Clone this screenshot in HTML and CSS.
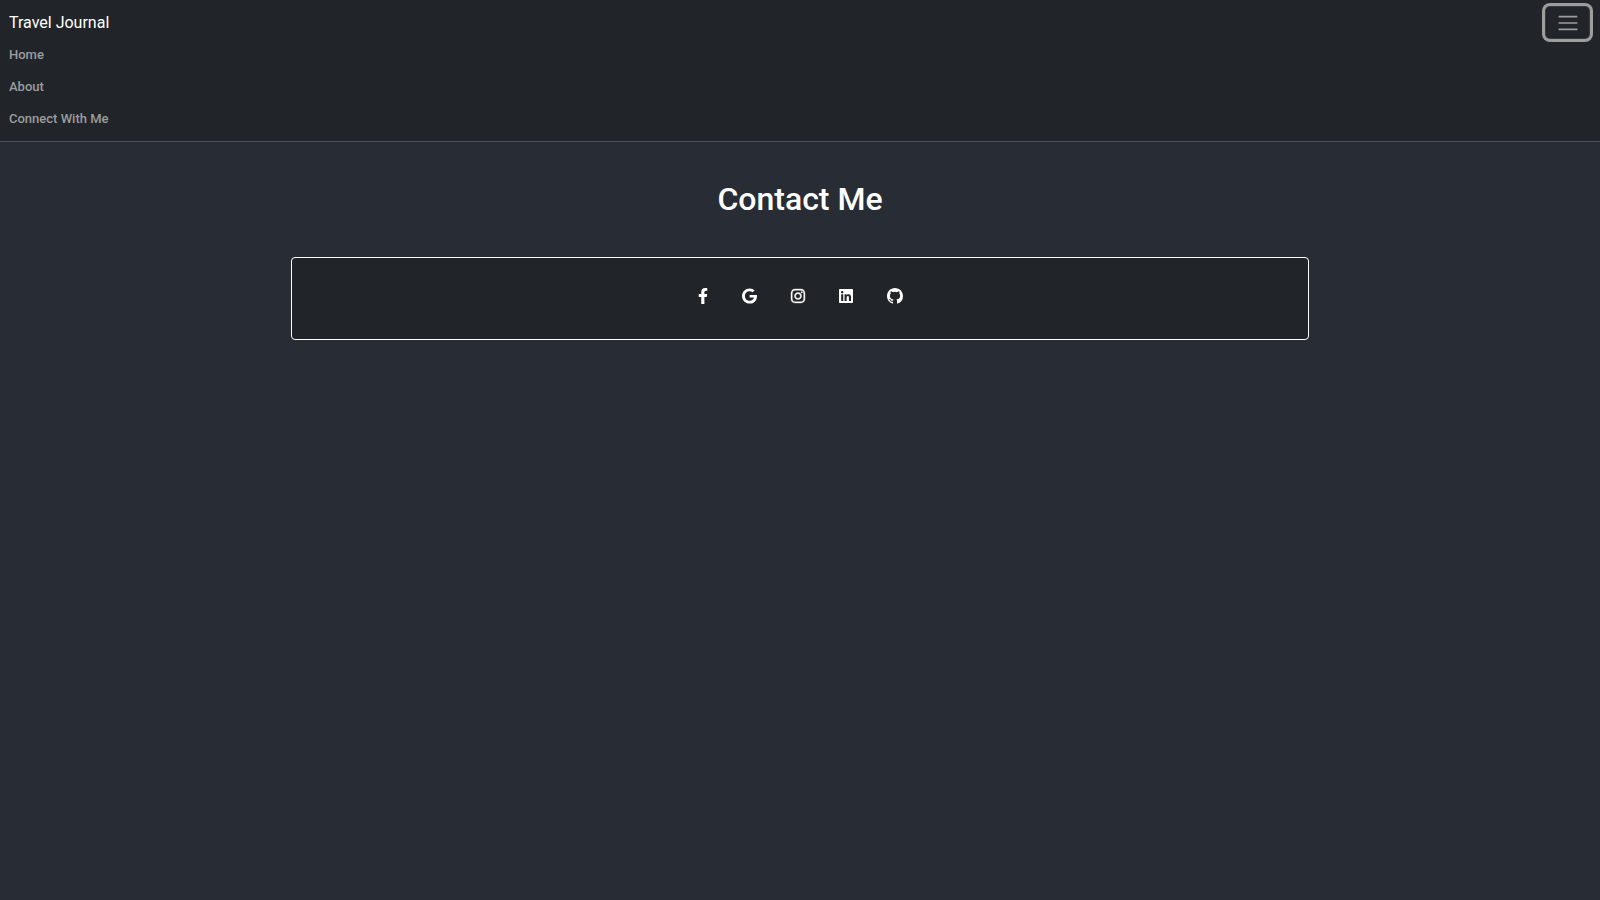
FILE: index.html
```html
<!DOCTYPE html>
<html lang="en">
<head>
<meta charset="utf-8">
<title>Travel Journal</title>
<link rel="stylesheet" href="styles.css">
</head>
<body>
<nav class="navbar">
  <div class="navbar-top">
    <a class="brand" href="#">Travel Journal</a>
    <button class="toggler" type="button" aria-label="Toggle navigation" aria-expanded="true">
      <svg viewBox="0 0 30 30" width="24" height="24" aria-hidden="true"><path d="M4 7h22M4 15h22M4 23h22" fill="none" stroke="currentColor" stroke-width="2" stroke-linecap="round" stroke-miterlimit="10"/></svg>
    </button>
  </div>
  <ul class="nav-list">
    <li><a class="nav-link" href="#">Home</a></li>
    <li><a class="nav-link" href="#">About</a></li>
    <li><a class="nav-link" href="#">Connect With Me</a></li>
  </ul>
</nav>
<main class="container">
  <h1 class="title">Contact Me</h1>
  <section class="card">
    <a class="social" href="#" aria-label="Facebook"><svg viewBox="0 0 320 512" width="10" height="16"><path d="M279.14 288l14.22-92.66h-88.91v-60.13c0-25.35 12.42-50.06 52.24-50.06h40.42V6.26S260.43 0 225.36 0c-73.22 0-121.08 44.38-121.08 124.72v70.62H22.89V288h81.39v224h100.17V288z"/></svg></a>
    <a class="social" href="#" aria-label="Google"><svg viewBox="0 0 488 512" width="15" height="16"><path d="M488 261.8C488 403.3 391.1 504 248 504 110.8 504 0 393.2 0 256S110.8 8 248 8c66.8 0 123 24.5 166.3 64.9l-67.5 64.9C258.5 52.6 94.3 116.6 94.3 256c0 86.5 69.1 156.6 153.7 156.6 98.2 0 135-70.4 140.8-106.9H248v-85.3h236.1c2.3 12.7 3.9 24.9 3.9 41.4z"/></svg></a>
    <a class="social" href="#" aria-label="Instagram"><svg class="heavy" viewBox="0 0 448 512" width="14" height="16"><path d="M224.1 141c-63.6 0-114.9 51.3-114.9 114.9s51.3 114.9 114.9 114.9S339 319.5 339 255.9 287.7 141 224.1 141zm0 189.6c-41.1 0-74.7-33.5-74.7-74.7s33.5-74.7 74.7-74.7 74.7 33.5 74.7 74.7-33.6 74.7-74.7 74.7zm146.4-194.3c0 14.9-12 26.8-26.8 26.8-14.9 0-26.8-12-26.8-26.8s12-26.8 26.8-26.8 26.8 12 26.8 26.8zm76.1 27.2c-1.7-35.9-9.9-67.7-36.2-93.9-26.2-26.2-58-34.4-93.9-36.2-37-2.1-147.9-2.1-184.9 0-35.8 1.7-67.6 9.9-93.9 36.1s-34.4 58-36.2 93.9c-2.1 37-2.1 147.9 0 184.9 1.7 35.9 9.9 67.7 36.2 93.9s58 34.4 93.9 36.2c37 2.1 147.9 2.1 184.9 0 35.9-1.7 67.7-9.9 93.9-36.2 26.2-26.2 34.4-58 36.2-93.9 2.1-37 2.1-147.8 0-184.8zM398.8 388c-7.8 19.6-22.9 34.7-42.6 42.6-29.5 11.7-99.5 9-132.1 9s-102.7 2.6-132.1-9c-19.6-7.8-34.7-22.9-42.6-42.6-11.7-29.5-9-99.5-9-132.1s-2.6-102.7 9-132.1c7.8-19.6 22.9-34.7 42.6-42.6 29.5-11.7 99.5-9 132.1-9s102.7-2.6 132.1 9c19.6 7.8 34.7 22.9 42.6 42.6 11.7 29.5 9 99.5 9 132.1s2.7 102.7-9 132.1z"/></svg></a>
    <a class="social" href="#" aria-label="LinkedIn"><svg viewBox="0 0 448 512" width="14" height="16"><path d="M416 32H31.9C14.3 32 0 46.5 0 64.3v383.4C0 465.5 14.3 480 31.9 480H416c17.6 0 32-14.5 32-32.3V64.3c0-17.8-14.4-32.3-32-32.3zM135.4 416H69V202.2h66.5V416zm-33.2-243c-21.3 0-38.5-17.3-38.5-38.5S80.9 96 102.2 96c21.2 0 38.5 17.3 38.5 38.5 0 21.3-17.2 38.5-38.5 38.5zm282.1 243h-66.4V312c0-24.8-.5-56.7-34.5-56.7-34.6 0-39.9 27-39.9 54.9V416h-66.4V202.2h63.7v29.2h.9c8.9-16.8 30.6-34.5 62.9-34.5 67.2 0 79.7 44.3 79.7 101.9V416z"/></svg></a>
    <a class="social" href="#" aria-label="GitHub"><svg viewBox="0 0 16 16" width="16" height="16"><path d="M8 0C3.58 0 0 3.58 0 8c0 3.54 2.29 6.53 5.47 7.59.4.07.55-.17.55-.38 0-.19-.01-.82-.01-1.49-2.01.37-2.53-.49-2.69-.94-.09-.23-.48-.94-.82-1.13-.28-.15-.68-.52-.01-.53.63-.01 1.08.58 1.23.82.72 1.21 1.87.87 2.33.66.07-.52.28-.87.51-1.07-1.78-.2-3.64-.89-3.64-3.95 0-.87.31-1.59.82-2.15-.08-.2-.36-1.02.08-2.12 0 0 .67-.21 2.2.82a7.6 7.6 0 0 1 4 0c1.53-1.04 2.2-.82 2.2-.82.44 1.1.16 1.92.08 2.12.51.56.82 1.27.82 2.15 0 3.07-1.87 3.75-3.65 3.95.29.25.54.73.54 1.48 0 1.07-.01 1.93-.01 2.2 0 .21.15.46.55.38A8.01 8.01 0 0 0 16 8c0-4.42-3.58-8-8-8z"/></svg></a>
  </section>
</main>
</body>
</html>
```
FILE: styles.css
```css
* { box-sizing: border-box; }
body {
  margin: 0;
  background: #282c34;
  color: #fff;
  font-family: Roboto, sans-serif;
  font-size: 16px;
  line-height: 24px;
}
a { color: inherit; text-decoration: none; }
.navbar {
  background: #212529;
  border-bottom: 1px solid #4d5059;
  padding: 6px 10px 6px 9px;
}
.navbar-top {
  display: flex;
  align-items: center;
  justify-content: space-between;
}
.toggler {
  display: flex;
  align-items: center;
  justify-content: center;
  width: 45px;
  height: 33px;
  padding: 0;
  background: transparent;
  color: rgba(255, 255, 255, 0.55);
  border: 1px solid rgba(255, 255, 255, 0.1);
  border-radius: 5px;
  box-shadow: 0 0 0 3px #9b9d9f;
}
.nav-list { list-style: none; margin: 0; padding: 0; }
.nav-link {
  display: block;
  padding: 6px 0;
  font-size: 13px;
  line-height: 20px;
  font-weight: 500;
  color: #9b9d9f;
}
.container {
  width: 1018px;
  max-width: 100%;
  margin: 0 auto;
  padding-top: 38px;
}
.title {
  margin: 0 0 38px;
  font-size: 32px;
  line-height: 39px;
  font-weight: 500;
  text-align: center;
}
.card {
  display: flex;
  justify-content: center;
  gap: 34px;
  padding: 30px 16px 35px;
  background: #212529;
  border: 1px solid #fff;
  border-radius: 4px;
}
.social svg { display: block; fill: currentColor; }
.social .heavy { stroke: currentColor; stroke-width: 12; overflow: visible; }
```
